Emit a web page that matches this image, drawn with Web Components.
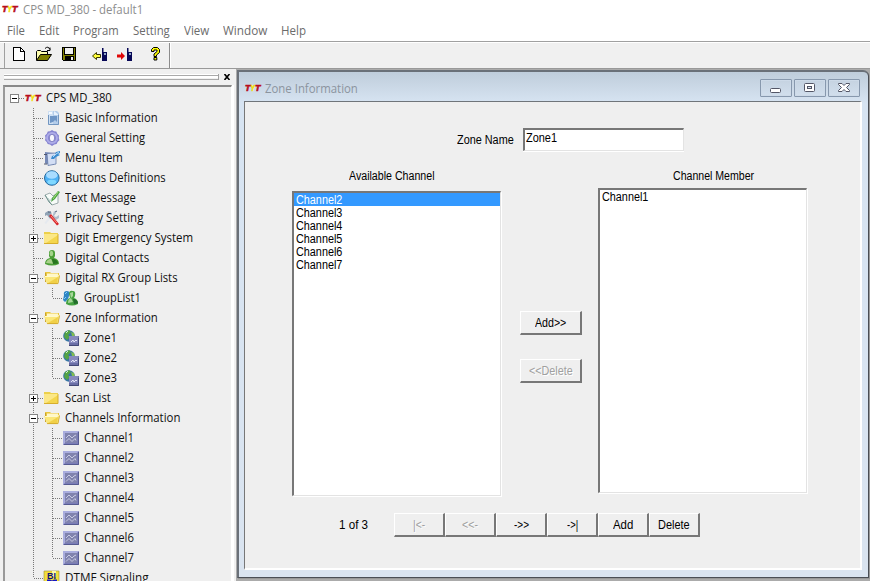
<!DOCTYPE html>
<html lang="en">
<head>
<meta charset="utf-8">
<title>CPS MD_380 - default1</title>
<style>
    body { margin: 0; width: 870px; height: 581px; overflow: hidden; background: #f0f0f0; }
</style>
</head>
<body>
<cps-app></cps-app>

<script>
const ICONS = {
    tyt: `<g font-family="Liberation Sans" font-weight="bold" font-style="italic" font-size="9.5">
        <text x="0" y="11" fill="#b80c1c" stroke="#b80c1c" stroke-width=".7" textLength="5.4" lengthAdjust="spacingAndGlyphs">T</text>
        <text x="5.500" y="11" fill="#f5e010" stroke="#f5e010" stroke-width=".7" textLength="4.4" lengthAdjust="spacingAndGlyphs">Y</text>
        <text x="10" y="11" fill="#b80c1c" stroke="#b80c1c" stroke-width=".7" textLength="5.4" lengthAdjust="spacingAndGlyphs">T</text></g>`,
    info: `<path d="M4 1h9l2 2v12H4z" fill="#b4cdea"/><path d="M4 1h5v14H4z" fill="#cfe0f3"/><path d="M4.500 5v9.500h10V4" fill="none" stroke="#7296c1"/><path d="M5 2h3v2H5z" fill="#f4f9ff"/><path d="M6 6h7v6l-2-2-2 2-3 1z" fill="#6e95c5"/><path d="M10 1v4h5z" fill="#e9f2fc"/>`,
    gear: `<path d="M8 0l2 1.300 2.300.2 1 2.200L15 5.500 14.800 8l.6 2.300-1.800 1.700-1 2.100-2.300.4L8 16l-2-1.500-2.300-.4-1-2.100L1 10.300 1.500 8 1 5.500l1.800-1.800 1-2.200L6 1.300z" fill="#8583d0"/><circle cx="8" cy="8" r="4.900" fill="none" stroke="#aeace8" stroke-width="2"/><ellipse cx="8" cy="8" rx="2.700" ry="3.700" fill="#f7f7fd" stroke="#7472bb" stroke-width=".8"/>`,
    menu: `<path d="M1 2l9 1v12L1 13.500z" fill="#7689b7"/><path d="M3 3.500l9-.5v11l-8 1.500z" fill="#d3def4" stroke="#667ba8" stroke-width=".8"/><path d="M0 4.500h3M0 14h3" stroke="#52586e"/><path d="M7 9l1-3 3-1 1-3 4-1v2l-2 1 2 1-4 2-2 2z" fill="#3a8bd0"/><path d="M9 7l3-3 3-2" stroke="#b3dcf8" fill="none"/>`,
    ball: `<circle cx="7.800" cy="8" r="7.300" fill="#4fb2f5" stroke="#28699b"/><ellipse cx="7.800" cy="5" rx="5.700" ry="3.800" fill="#a9dcff"/><ellipse cx="7.800" cy="12" rx="4.500" ry="2.300" fill="#80d8ff"/>`,
    message: `<path d="M1 5l5-2 3 3 5-3v10l-6 2z" fill="#f7fbf8" stroke="#879899" stroke-width=".8"/><path d="M1 5l4 7 3 3" fill="none" stroke="#719590"/><path d="M4 8l2 3 2-3 1-1" fill="none" stroke="#bed4cf"/><path d="M7 12l1-4 6-7 2 1-5 7z" fill="#4aa342"/><path d="M9 9l5-7" stroke="#a7de79"/>`,
    privacy: `<path d="M1 3l3-2 4 2-2 2 2 2-2 2-3-4-2 1z" fill="#8fa2b5"/><path d="M10 1l2 2-2 3 2 1 3-2v3l-3 2-4-2z" fill="#afbdcb"/><path d="M5 6l2-2 8 10-2 1.500z" fill="#d6262a"/><path d="M7 6l6 7" stroke="#ff8b82"/><path d="M6 9l-4 5-1.500-1L4 8" fill="#e5e9ef"/><path d="M4 2h3M11 2l2-1" stroke="#495b76"/>`,
    folder: `<path d="M0 2h6l1 1h7v11H0z" fill="#ecd04b"/><path d="M0 4h14v9H0z" fill="#fbe786"/><path d="M2 13L14 5v8z" fill="#f4d64d"/><path d="M0 13.500h14V4" fill="none" stroke="#d7ae2c"/>`,
    open: `<path d="M1 2h5l1 1h8v4H1z" fill="#e9c63e"/><path d="M1.500 3v9" stroke="#c8a12d"/><path d="M3 3.500h11V6H3z" fill="#fff7c8"/><path d="M0 6h13l3-1-2 9H3z" fill="#fae779"/><path d="M4 13l10-6-1 7H4z" fill="#f1d047"/><path d="M1 6.500h12l2-1" fill="none" stroke="#fff9cc"/><path d="M3 13.600h11l1.500-8" fill="none" stroke="#cda22a" stroke-width=".8"/>`,
    contact: `<path d="M1 14q0-5 5-6l-1-2V3q0-3 3-3t3 3v3l-1 2q5 1 5 6-7 3-14 0z" fill="#4b9e37"/><ellipse cx="7.400" cy="3.500" rx="1.800" ry="2.700" fill="#a4d48b"/><path d="M2 13q1-4 5-4l3 5z" fill="#a8d18b"/><path d="M8 9l1 5 5-.5q0-4-5-4.500" fill="#28751f"/>`,
    group: `<path d="M1 5q-1-4 3-4 2 0 3 2l-2 6-3 3-2-2z" fill="#2e85c4"/><path d="M2 4l2-2M1 9l2-2" stroke="#83cdf6"/><path d="M3 14q0-5 4-6L6 4q0-4 4-3 3 0 2 5l-1 2q4 1 4 6-6 3-12 0z" fill="#45a140"/><path d="M7 3l3-1v4l-2 2 2 4-5 1q0-4 3-5z" fill="#a6d799"/><path d="M10 9l1 5 4-.5q0-4-4-4.500" fill="#236d2c"/>`,
    zone: `<circle cx="6" cy="6" r="5.800" fill="#3674a4"/><path d="M2 2l4-2 2 2-3 3 2 2-3 3-3-3z" fill="#54a344"/><path d="M8 2l3 1 1 4-3-1z" fill="#7fbc4e"/><path d="M3 3l2-2" stroke="#d3f0d4"/><path d="M6 6h10v10H6z" fill="#6a6ea5"/><path d="M6 6h9v7H6z" fill="#8689bd"/><path d="M8 12l2-2 1 2 2-2 1 1" fill="none" stroke="#e3e4f5"/><path d="M6 15.500h9.500V8" fill="none" stroke="#434977"/>`,
    channel: `<path d="M0 1h16v14H0z" fill="#7a7db8"/><path d="M0 1h16l-2 2H2v10l-2 2z" fill="#aaaede"/><path d="M2 3h12v10H2z" fill="#8083ae"/><path d="M3 8l3-3 3 3 2-2 2-1M3 11.500l3-3 3 3 3-3 1 2" fill="none" stroke="#c9cbe2"/><path d="M1 14.500h14.500V2" fill="none" stroke="#565b91"/>`,
    dtmf: `<path d="M0 1h15v14H0z" fill="#f2df3b" stroke="#9a8d35" stroke-width=".6"/><path d="M8 1h4v6H8z" fill="#fff8ac"/><text x="3" y="8.500" fill="#111177" font-family="Liberation Sans" font-weight="bold" font-size="9" textLength="9" lengthAdjust="spacingAndGlyphs">BI</text><path d="M3 9.500h3l2 1 2-1h3v5H3z" fill="#1717c4"/>`,
    newfile: `<path d="M2.500 1.500h7l4 4v9h-11z" fill="#fff" stroke="#000"/><path d="M9.500 1.500v4h4" fill="none" stroke="#000"/>`,
    openfile: `<path d="M.5 14V5.500l1-1h3l1 1h6v3" fill="#ffffb0" stroke="#000"/><path d="M.5 14.500l4-6h11l-4 6z" fill="#808000" stroke="#000"/><path d="M9 2.500q3-3 5 1m0-2v3h-3" fill="none" stroke="#000"/>`,
    save: `<path d="M1.500 1.500h13v13h-12l-1-1z" fill="#808000" stroke="#000"/><path d="M4 2h8v6H4z" fill="#f0f0f0"/><path d="M3.500 1v7h9V1" fill="none" stroke="#000"/><path d="M4 10h9v4H4z" fill="#000"/><path d="M10 11h2v3h-2z" fill="#f0f0f0"/>`,
    read: `<path d="M.5 10l4-3.500v2h4v3h-4v2z" fill="#ffff39" stroke="#393900"/><path d="M10 6h5v9h-5zM10 2h1.500v4H10z" fill="#070757"/><path d="M12 7h2v2h-2z" fill="#90a6c6"/>`,
    write: `<path d="M0 8.500h4V6l4 4-4 4v-2.500H0z" fill="#e00707"/><path d="M10 6h5v9h-5zM10 2h1.500v4H10z" fill="#070757"/><path d="M12 7h2v2h-2z" fill="#90a6c6"/>`,
    help: `<path d="M4.500 5.500v-2l2-2h4l2 2v3l-3 2.500v1.500H7V8l3-2.500V4H7v1.500z" fill="#ff0" stroke="#000"/><path d="M7 11.500h2.800V14H7z" fill="#ff0" stroke="#000"/>`
};

class UiIcon extends HTMLElement {
    constructor() {
        super();
        this.attachShadow({ mode: "open" });
    }
    connectedCallback() {
        const crisp = ["newfile", "save"].includes(this.getAttribute("name"));
        this.shadowRoot.innerHTML = `
            <style>
                :host { display: block; flex: none; width: 17px; height: 16px; }
                svg { display: block; overflow: visible; }
            </style>
            <svg width="16" height="16" viewBox="0 0 16 16" ${crisp ? 'shape-rendering="crispEdges"' : ""}>${ICONS[this.getAttribute("name")]}</svg>
        `;
    }
}

// Text squeezed or stretched horizontally to the width given in "w"
class FitText extends HTMLElement {
    constructor() {
        super();
        this.attachShadow({ mode: "open" });
        this.shadowRoot.innerHTML = `
            <style>
                :host { display: block; flex: none; white-space: nowrap; }
                span { display: block; width: max-content; transform-origin: 0 50%; }
            </style>
            <span><slot></slot></span>
        `;
    }
    connectedCallback() {
        const span = this.shadowRoot.querySelector("span");
        const w = Number(this.getAttribute("w"));
        this.style.width = w + "px";
        span.style.transform = `scaleX(${w / span.offsetWidth})`;
    }
}

class MenuBar extends HTMLElement {
    constructor() {
        super();
        this.attachShadow({ mode: "open" });
        this.shadowRoot.innerHTML = `
            <style>
                :host { display: flex; gap: 14px; height: 21px; padding-left: 7px; line-height: 21px; color: #6b6b6b; background: #fff; border-bottom: 1px solid #a0a0a0; }
            </style>
            <fit-text w="18">File</fit-text>
            <fit-text w="20">Edit</fit-text>
            <fit-text w="46">Program</fit-text>
            <fit-text w="37">Setting</fit-text>
            <fit-text w="25">View</fit-text>
            <fit-text w="44">Window</fit-text>
            <fit-text w="25">Help</fit-text>
        `;
    }
}

class ToolBar extends HTMLElement {
    constructor() {
        super();
        this.attachShadow({ mode: "open" });
        this.shadowRoot.innerHTML = `
            <style>
                :host { display: block; height: 25px; border-top: 1px solid #fff; border-bottom: 1px solid #999; background: #f0f0f0; }
                .bar { display: flex; align-items: center; box-sizing: border-box; width: 166px; height: 25px; margin-left: 4px; padding: 0 0 3px 6px; border-left: 1px solid #a0a0a0; border-right: 1px solid #8c8c8c; box-shadow: 1px 0 #fff; }
                ui-icon { margin-right: 8px; }
                i { width: 1px; height: 22px; background: #999; }
                i:nth-of-type(1) { margin-right: 8px; margin-left: -2px; }
                i:nth-of-type(2) { margin-right: 7px; margin-left: -2px; }
            </style>
            <div class="bar">
                <ui-icon name="newfile"></ui-icon>
                <ui-icon name="openfile"></ui-icon>
                <ui-icon name="save"></ui-icon>
                <i></i>
                <ui-icon name="read"></ui-icon>
                <ui-icon name="write"></ui-icon>
                <i></i>
                <ui-icon name="help"></ui-icon>
            </div>
        `;
    }
}

class TreeItem extends HTMLElement {
    constructor() {
        super();
        this.attachShadow({ mode: "open" });
    }
    connectedCallback() {
        const level = Number(this.getAttribute("level"));
        const sign = this.getAttribute("sign");
        const last = this.hasAttribute("last");
        // x of the branch line, relative to the tree content
        const x = 8.5 + level * 19;
        let lines = `M${x} 10.500H${x + 11}`;
        if (level > 0) lines += `M${x} 0V${last ? 10 : 20}`;
        if (level > 1) lines += `M${x - 19} 0V20`;
        const box = sign ? `<path d="M${x - 4} 6.500h8v8h-8z" fill="#fff" stroke="#848484"/>
            <path d="M${x - 2.5} 10.500h5${sign === "+" ? `M${x} 8v5` : ""}" stroke="#000"/>` : "";
        this.shadowRoot.innerHTML = `
            <style>
                :host { display: flex; height: 20px; align-items: center; line-height: 20px; }
                svg { display: block; flex: none; }
                ui-icon { margin-right: 4px; margin-left: 1px; }
            </style>
            <svg width="${18 + level * 19}" height="20" shape-rendering="crispEdges">
                <path d="${lines}" fill="none" stroke="#777" stroke-dasharray="1 1"/>${box}
            </svg>
            <ui-icon name="${this.getAttribute("icon")}"></ui-icon>
            <fit-text w="${this.getAttribute("w")}">${this.getAttribute("label")}</fit-text>
        `;
    }
}

class SideTree extends HTMLElement {
    constructor() {
        super();
        this.attachShadow({ mode: "open" });
        const rows = [
            [0, "tyt", "CPS MD_380", 66, "-"],
            [1, "info", "Basic Information", 93],
            [1, "gear", "General Setting", 80],
            [1, "menu", "Menu Item", 58],
            [1, "ball", "Buttons Definitions", 101],
            [1, "message", "Text Message", 71],
            [1, "privacy", "Privacy Setting", 78],
            [1, "folder", "Digit Emergency System", 128, "+"],
            [1, "contact", "Digital Contacts", 84],
            [1, "open", "Digital RX Group Lists", 113, "-"],
            [2, "group", "GroupList1", 57, "", true],
            [1, "open", "Zone Information", 93, "-"],
            [2, "zone", "Zone1", 33],
            [2, "zone", "Zone2", 33],
            [2, "zone", "Zone3", 33, "", true],
            [1, "folder", "Scan List", 46, "+"],
            [1, "open", "Channels Information", 115, "-"]
        ];
        for (let i = 1; i <= 7; i++) rows.push([2, "channel", "Channel" + i, 50, "", i === 7]);
        rows.push([1, "dtmf", "DTMF Signaling", 84, "", true]);
        this.shadowRoot.innerHTML = `
            <style>
                :host { display: flex; flex-direction: column; box-sizing: border-box; flex: none; width: 236px; height: 512px; padding: 5px 4px 0 3px; background: #f0f0f0; overflow: hidden; }
                header { display: flex; align-items: center; gap: 5px; height: 6px; margin: 0 0 5px 1px; }
                .grip { width: 214px; height: 6px; border: solid #a0a0a0; border-width: 0 1px 0 0; background: linear-gradient(#fff 1px, #aaa 1px 2px, #fff 2px 4px, #f0f0f0 4px 5px, #aaa 5px); }
                .tree { flex: 1; padding: 1px 0 0 1px; border: 2px solid #999; border-top-color: #888; border-right: 1px solid #fff; border-bottom: 0; background: #efefef; box-shadow: 2px 0 #fff; color: #111; overflow: hidden; }
            </style>
            <header>
                <div class="grip"></div>
                <svg width="7" height="6"><path d="M.5 0l5 6M5.500 0l-5 6" stroke="#000" stroke-width="1.600"/></svg>
            </header>
            <div class="tree">
                ${rows.map(([level, icon, label, w, sign, last]) =>
                    `<tree-item level="${level}" icon="${icon}" label="${label}" w="${w}" sign="${sign || ""}" ${last ? "last" : ""}></tree-item>`).join("")}
            </div>
        `;
    }
}

class PushButton extends HTMLElement {
    constructor() {
        super();
        this.attachShadow({ mode: "open" });
        this.shadowRoot.innerHTML = `
            <style>
                :host { display: flex; justify-content: center; align-items: center; box-sizing: border-box; width: 62px; height: 24px; border: solid; border-width: 1px 2px 2px 1px; border-color: #fff #777 #777 #fff; background: #efefef; color: #000; }
                :host([disabled]) { color: #a0a0a0; text-shadow: 1px 1px #fff; }
            </style>
            <slot></slot>
        `;
    }
}

class ListBox extends HTMLElement {
    constructor() {
        super();
        this.attachShadow({ mode: "open" });
    }
    connectedCallback() {
        const items = this.getAttribute("items").split(",");
        const selected = this.getAttribute("selected");
        this.shadowRoot.innerHTML = `
            <style>
                :host { display: block; box-sizing: border-box; width: 209px; height: 305px; border: solid; border-width: 2px 1px 1px 2px; border-color: #777 #e3e3e3 #e3e3e3 #777; background: #fff; box-shadow: 1px 1px #fff; }
                div { height: 13px; padding-left: 2px; line-height: 14px; }
                .on { background: #3399ff; color: #fff; }
            </style>
            ${items.map(t => `<div class="${t === selected ? "on" : ""}"><fit-text w="46">${t}</fit-text></div>`).join("")}
        `;
    }
}

class ZoneForm extends HTMLElement {
    constructor() {
        super();
        this.attachShadow({ mode: "open" });
        this.shadowRoot.innerHTML = `
            <style>
                :host { display: block; height: 466px; font: 12px/14px "Liberation Sans", Arial, sans-serif; color: #000; }
                .name { display: flex; gap: 9px; align-items: center; padding: 26px 0 0 212px; }
                .field { box-sizing: border-box; width: 161px; height: 23px; padding: 1px 0 0 1px; border: solid; border-width: 2px 1px 1px 2px; border-color: #777 #e3e3e3 #e3e3e3 #777; background: #fff; box-shadow: 0 1px #fff; }
                .lists { display: grid; grid-template-columns: 209px 62px 209px; column-gap: 19px; padding: 18px 0 0 47px; }
                .col { display: flex; flex-direction: column; align-items: center; gap: 8px; }
                .left fit-text { margin-left: -10px; }
                .right { gap: 5px; margin-left: -3px; margin-right: 3px; }
                .right fit-text { margin-left: 21px; }
                .moves { gap: 24px; padding-top: 142px; }
                .nav { display: flex; align-items: center; padding: 17px 0 0 94px; }
                .nav fit-text[w="29"] { margin-right: 26px; }
                .nav push-button { width: 51px; }
            </style>
            <div class="name">
                <fit-text w="57">Zone Name</fit-text>
                <div class="field"><fit-text w="31">Zone1</fit-text></div>
            </div>
            <div class="lists">
                <div class="col left">
                    <fit-text w="86">Available Channel</fit-text>
                    <list-box items="Channel2,Channel3,Channel4,Channel5,Channel6,Channel7" selected="Channel2"></list-box>
                </div>
                <div class="col moves">
                    <push-button><fit-text w="31">Add&gt;&gt;</fit-text></push-button>
                    <push-button disabled><fit-text w="44">&lt;&lt;Delete</fit-text></push-button>
                </div>
                <div class="col right">
                    <fit-text w="81">Channel Member</fit-text>
                    <list-box items="Channel1"></list-box>
                </div>
            </div>
            <div class="nav">
                <fit-text w="29">1 of 3</fit-text>
                <push-button disabled><fit-text w="12">|&lt;-</fit-text></push-button>
                <push-button disabled><fit-text w="16">&lt;&lt;-</fit-text></push-button>
                <push-button><fit-text w="15">-&gt;&gt;</fit-text></push-button>
                <push-button><fit-text w="11">-&gt;|</fit-text></push-button>
                <push-button><fit-text w="20">Add</fit-text></push-button>
                <push-button><fit-text w="32">Delete</fit-text></push-button>
            </div>
        `;
    }
}

class ChildWindow extends HTMLElement {
    constructor() {
        super();
        this.attachShadow({ mode: "open" });
        this.shadowRoot.innerHTML = `
            <style>
                :host { display: block; box-sizing: border-box; width: 632px; height: 508px; padding: 0 6px; border: solid #6a7078; border-width: 2px 1px 1px 2px; border-bottom-color: #4a4e55; border-right-color: #4a4e55; border-top-right-radius: 6px; background: linear-gradient(#bfcddb, #d7e4f2 31px, #dae4f0); box-shadow: 1px 1px #999; }
                header { display: flex; align-items: center; box-sizing: border-box; height: 29px; padding: 4px 0 0; color: #8b949e; }
                header ui-icon { margin-right: 3px; margin-top: -2px; }
                .buttons { display: flex; gap: 2px; margin-top: -1px; margin-left: auto; margin-right: 2px; }
                .buttons svg { box-sizing: border-box; width: 32px; height: 18px; border: 1px solid #8798ad; border-radius: 1px; box-shadow: inset 0 0 0 1px #cddae8; }
                .body { box-sizing: border-box; width: 618px; height: 469px; margin-left: -1px; border: 1px solid #777; border-top-color: #70757a; border-right: 2px solid #fff; border-bottom: 2px solid #fff; background: #efefef; }
            </style>
            <header>
                <ui-icon name="tyt"></ui-icon>
                <fit-text w="93">Zone Information</fit-text>
                <div class="buttons">
                    <svg viewBox="0 0 30 16"><rect x="9.500" y="8.500" width="10" height="4" rx="1" fill="#fff" stroke="#535666"/></svg>
                    <svg viewBox="0 0 30 16"><rect x="9.500" y="3.500" width="10" height="8" rx="1" fill="#fff" stroke="#535666"/><rect x="12.500" y="6.500" width="4" height="2" fill="#d8e2ee" stroke="#535666"/></svg>
                    <svg viewBox="0 0 30 16"><path d="M9.500 3.500h3.500L15 5.500l2-2h3.500v1L17.500 7.500l3 3v1H17l-2-2-2 2H9.500v-1l3-3-3-3z" fill="#fff" stroke="#535666"/></svg>
                </div>
            </header>
            <div class="body"><slot></slot></div>
        `;
    }
}

class CpsApp extends HTMLElement {
    constructor() {
        super();
        this.attachShadow({ mode: "open" });
        this.shadowRoot.innerHTML = `
            <style>
                :host { display: block; width: 870px; height: 581px; overflow: hidden; font: 12px/20px "Open Sans", "Noto Sans", sans-serif; }
                .title { display: flex; align-items: center; gap: 4px; height: 20px; padding-left: 2px; color: #8e8e8e; background: #fff; }
                .title ui-icon { margin-top: -2px; }
                .main { display: flex; height: 512px; }
                .mdi { flex: 1; padding: 1px 0 0 1px; background: #ababab; overflow: hidden; }
            </style>
            <div class="title">
                <ui-icon name="tyt"></ui-icon>
                <fit-text w="120">CPS MD_380 - default1</fit-text>
            </div>
            <menu-bar></menu-bar>
            <tool-bar></tool-bar>
            <div class="main">
                <side-tree></side-tree>
                <div class="mdi">
                    <child-window><zone-form></zone-form></child-window>
                </div>
            </div>
        `;
    }
}

customElements.define("ui-icon", UiIcon);
customElements.define("fit-text", FitText);
customElements.define("menu-bar", MenuBar);
customElements.define("tool-bar", ToolBar);
customElements.define("tree-item", TreeItem);
customElements.define("side-tree", SideTree);
customElements.define("push-button", PushButton);
customElements.define("list-box", ListBox);
customElements.define("zone-form", ZoneForm);
customElements.define("child-window", ChildWindow);
customElements.define("cps-app", CpsApp);
</script>
</body>
</html>
